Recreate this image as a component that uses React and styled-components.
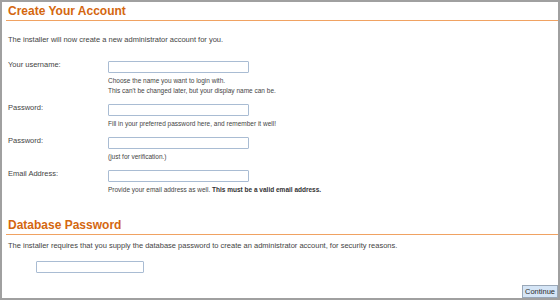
import React from 'react'
import styled, {createGlobalStyle} from 'styled-components'

const GlobalStyle=createGlobalStyle`
html,body{
    margin:0;
    padding:0;
    background:#fff;
}
body{
    font-family:"Liberation Sans",Arial,sans-serif;
    color:#444;
}
`

const Frame=styled.div`
box-sizing:border-box;
width:560px;
height:300px;
border:2px solid #a0a0a0;
padding-left:4px;
overflow:hidden;
display:flex;
flex-direction:column;
`
const Heading=styled.h2`
margin:${p=>p.$top}px 0 0 0;
padding:0 0 2px 2px;
font-size:12px;
line-height:14px;
font-weight:bold;
color:#d4670f;
border-bottom:1px solid #f0a262;
`
const Text=styled.p`
margin:${p=>p.$top}px 0 0 2px;
font-size:7.5px;
line-height:10px;
color:#444;
`
const Form=styled.div`
margin:16px 0 0 2px;
display:flex;
flex-direction:column;
gap:8px;
`
const Row=styled.div`
display:flex;
align-items:flex-start;
`
const Label=styled.label`
width:100px;
flex-shrink:0;
margin-top:-1px;
font-size:7.5px;
line-height:10px;
`
const Field=styled.div`
display:flex;
flex-direction:column;
`
const Input=styled.input`
box-sizing:border-box;
width:${p=>p.$w}px;
height:12px;
margin:${p=>p.$top||0}px 0 0 ${p=>p.$left||0}px;
padding:0 2px;
border:1px solid #a9bcd3;
border-radius:1px;
background:#fff;
outline:none;
`
const Hints=styled.div`
margin-top:3px;
font-size:6.5px;
line-height:10px;
color:#444;
b{
    color:#333;
}
`
const Footer=styled.div`
margin-top:auto;
display:flex;
justify-content:flex-end;
`
const Button=styled.button`
box-sizing:border-box;
height:13px;
padding:0 2px;
border:1px solid #9aa8b8;
border-radius:0;
background:#d5e5f6;
font-family:"Liberation Sans",Arial,sans-serif;
font-size:7.5px;
line-height:11px;
color:#2a2a2a;
`

const fields=[
    {label:'Your username:',type:'text',hints:['Choose the name you want to login with.',"This can't be changed later, but your display name can be."]},
    {label:'Password:',type:'password',hints:['Fill in your preferred password here, and remember it well!']},
    {label:'Password:',type:'password',hints:['(just for verification.)']},
    {label:'Email Address:',type:'text',hints:[<>Provide your email address as well. <b>This must be a valid email address.</b></>]},
]

const App=()=>{
    return(
        <>
        <GlobalStyle/>
        <Frame>
            <Heading $top={2}>Create Your Account</Heading>
            <Text $top={14}>The installer will now create a new administrator account for you.</Text>
            <Form>
                {fields.map((f,i)=>(
                    <Row key={i}>
                        <Label>{f.label}</Label>
                        <Field>
                            <Input type={f.type} $w={141}/>
                            <Hints>
                                {f.hints.map((h,j)=>(
                                    <div key={j}>{h}</div>
                                ))}
                            </Hints>
                        </Field>
                    </Row>
                ))}
            </Form>
            <Heading $top={23}>Database Password</Heading>
            <Text $top={6}>The installer requires that you supply the database password to create an administrator account, for security reasons.</Text>
            <Input type="password" $w={108} $left={30} $top={10}/>
            <Footer>
                <Button>Continue</Button>
            </Footer>
        </Frame>
        </>
    )
}

export default App;
